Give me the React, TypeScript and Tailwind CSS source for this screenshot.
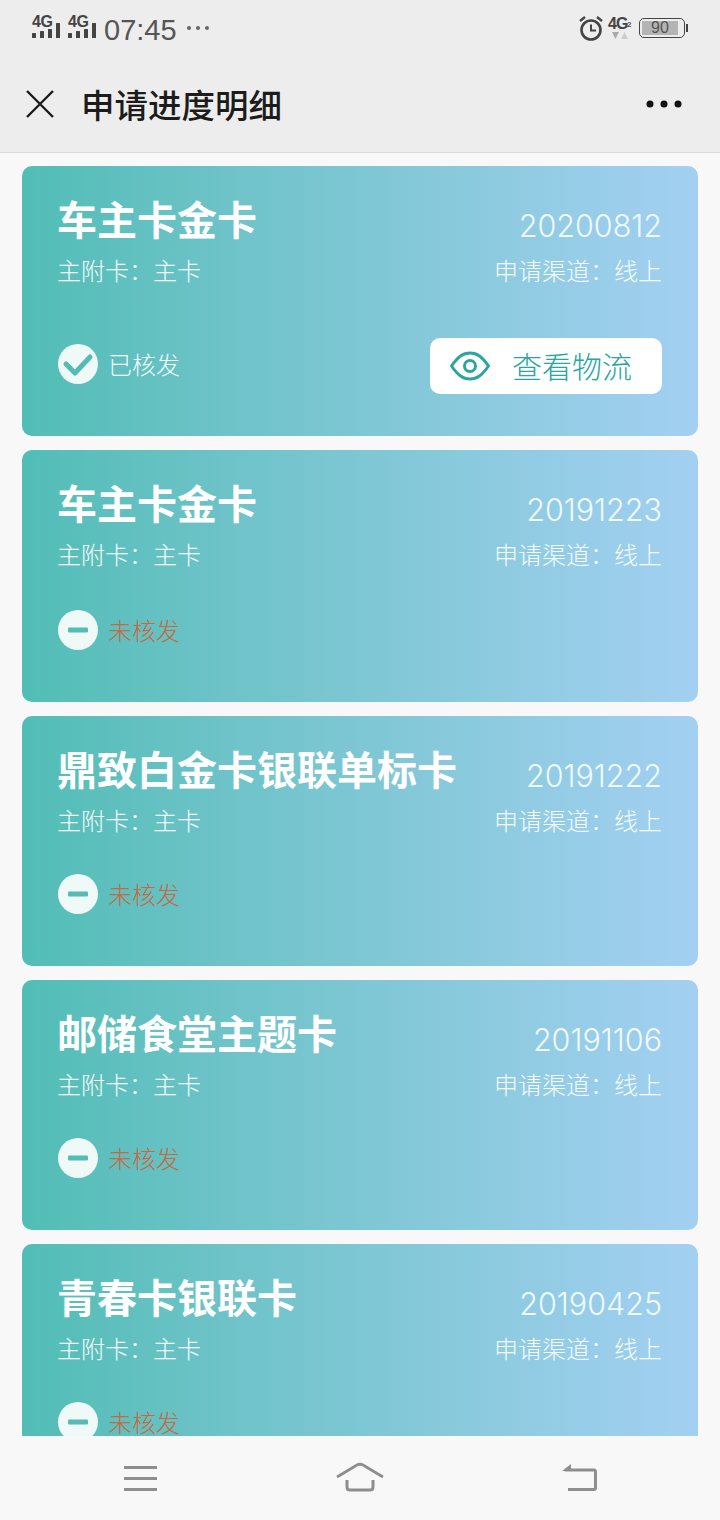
const CJK = "font-['Noto_Sans_CJK_SC','Noto_Sans',sans-serif]";

function Signal() {
  return (
    <div className="relative h-[26px] w-[30px]">
      <span className="absolute left-0 top-0 font-['Liberation_Sans',sans-serif] text-[16px] font-bold leading-[18px] tracking-[-0.5px] text-[#444]">4G</span>
      <svg width="30" height="26" viewBox="0 0 30 26" className="absolute left-0 top-0">
        <rect x="0" y="20" width="4" height="5" rx="0.5" fill="#444" />
        <rect x="8" y="18" width="4" height="7" rx="0.5" fill="#444" />
        <rect x="16" y="16" width="4" height="9" rx="0.5" fill="#444" />
        <rect x="24" y="10" width="4" height="15" rx="0.5" fill="#444" />
      </svg>
    </div>
  );
}

function StatusBar() {
  return (
    <div className="flex h-[60px] items-start justify-between pl-[32px] pr-[35px] pt-[13px]">
      <div className="flex items-start">
        <div className="flex gap-[6px]">
          <Signal />
          <Signal />
        </div>
        <span className="ml-[6px] mt-[1px] font-['Liberation_Sans',sans-serif] text-[29px] leading-[32px] text-[#555]">07:45</span>
        <svg width="24" height="6" viewBox="0 0 24 6" className="ml-[9px] mt-[12px]">
          <circle cx="3" cy="3" r="2" fill="#666" />
          <circle cx="12" cy="3" r="2" fill="#666" />
          <circle cx="21" cy="3" r="2" fill="#666" />
        </svg>
      </div>
      <div className="mt-[1px] flex items-center">
        <svg width="26" height="26" viewBox="0 0 26 26">
          <circle cx="13" cy="15" r="9.5" fill="none" stroke="#444" strokeWidth="2.6" />
          <path d="M13 9.5V15.5H18" fill="none" stroke="#444" strokeWidth="2" />
          <path d="M2 6L7 2M24 6L19 2" stroke="#444" strokeWidth="2.4" />
        </svg>
        <div className="relative ml-[4px] h-[28px] w-[26px]">
          <span className="absolute left-0 top-0 font-['Liberation_Sans',sans-serif] text-[16px] font-bold leading-[20px] tracking-[-1px] text-[#444]">4G</span>
          <span className="absolute left-[19px] top-[6px] font-['Liberation_Sans',sans-serif] text-[8px] font-bold leading-[10px] text-[#555]">2</span>
          <svg width="16" height="7" viewBox="0 0 16 7" className="absolute left-[4px] top-[18px]">
            <path d="M0 0H7L3.5 7Z" fill="#aaa" />
            <path d="M9 7H16L12.5 0Z" fill="#ccc" />
          </svg>
        </div>
        <div className="relative ml-[5px] flex h-[20px] w-[46px] items-center rounded-[5px] border border-[#444] p-[2px]">
          <div className="flex h-full w-[36px] items-center justify-center bg-[#b4b4b4]">
            <span className="font-['Liberation_Sans',sans-serif] text-[16px] leading-none text-[#555]">90</span>
          </div>
          <div className="absolute right-[-4px] top-[5px] h-[8px] w-[2px] bg-[#444]" />
        </div>
      </div>
    </div>
  );
}

function NavBar() {
  return (
    <div className="flex h-[93px] items-center justify-between border-b border-[#dcdcdc] pb-[5px] pl-[26px] pr-[36px]">
      <div className="flex items-center">
        <svg width="28" height="28" viewBox="0 0 28 28">
          <path d="M1 1L27 27M27 1L1 27" stroke="#1c1c1c" strokeWidth="2.4" />
        </svg>
        <span className={`ml-[27px] ${CJK} text-[33.5px] font-medium leading-[44px] text-[#1c1c1c]`}>申请进度明细</span>
      </div>
      <svg width="38" height="8" viewBox="0 0 38 8">
        <circle cx="4" cy="4" r="3.5" fill="#111" />
        <circle cx="18" cy="4" r="3.5" fill="#111" />
        <circle cx="32" cy="4" r="3.5" fill="#111" />
      </svg>
    </div>
  );
}

function CheckBadge() {
  return (
    <svg width="40" height="40" viewBox="0 0 40 40">
      <circle cx="20" cy="20" r="20" fill="#eef9f8" />
      <path d="M8 20L17 29L32 13" fill="none" stroke="#56bab6" strokeWidth="5" strokeLinecap="round" strokeLinejoin="round" />
    </svg>
  );
}

function MinusBadge() {
  return (
    <svg width="40" height="40" viewBox="0 0 40 40">
      <circle cx="20" cy="20" r="20" fill="#eef9f8" />
      <rect x="10" y="17.5" width="20" height="5" rx="1" fill="#56bab6" />
    </svg>
  );
}

type CardData = {
  title: string;
  date: string;
  heightClass: string;
  statusGapClass: string;
  done?: boolean;
};

const cards: CardData[] = [
  { title: "车主卡金卡", date: "20200812", heightClass: "h-[270px]", statusGapClass: "mt-[47px]", done: true },
  { title: "车主卡金卡", date: "20191223", heightClass: "h-[252px]", statusGapClass: "mt-[39px]" },
  { title: "鼎致白金卡银联单标卡", date: "20191222", heightClass: "h-[250px]", statusGapClass: "mt-[37px]" },
  { title: "邮储食堂主题卡", date: "20191106", heightClass: "h-[250px]", statusGapClass: "mt-[37px]" },
  { title: "青春卡银联卡", date: "20190425", heightClass: "h-[250px]", statusGapClass: "mt-[37px]" },
];

function Card({ title, date, heightClass, statusGapClass, done }: CardData) {
  return (
    <div className={`${heightClass} shrink-0 rounded-[10px] bg-gradient-to-r from-[#51bdb6] to-[#a3d0f2] pl-[36px] pr-[36px] pt-[24px]`}>
      <div className="flex items-end justify-between">
        <span className={`-ml-px ${CJK} text-[40px] font-bold leading-[56px] text-white`}>{title}</span>
        <span className="mb-[2px] font-['Inter',sans-serif] text-[30.5px] font-light leading-[36px] text-[#f0f9fb]">{date}</span>
      </div>
      <div className="mt-[7px] flex items-center justify-between">
        <span className={`-ml-px ${CJK} text-[24px] font-light leading-[34px] text-[#f4fcfc]`}>主附卡：主卡</span>
        <span className={`${CJK} text-[24px] font-light leading-[34px] text-[#f4fcfc]`}>申请渠道：线上</span>
      </div>
      <div className={`${statusGapClass} flex items-center justify-between`}>
        <div className="flex items-center">
          {done ? <CheckBadge /> : <MinusBadge />}
          <span className={`ml-[10px] ${CJK} text-[24px] font-light leading-[34px] ${done ? "text-[#f4fcfc]" : "text-[#c8683f]"}`}>
            {done ? "已核发" : "未核发"}
          </span>
        </div>
        {done && (
          <div className="mt-[4px] flex h-[56px] w-[232px] items-center rounded-[10px] bg-white pl-[20px]">
            <svg width="40" height="30" viewBox="0 0 40 30">
              <path d="M1.5 15C8 5.5 13 2 20 2C27 2 32 5.5 38.5 15C32 24.5 27 28 20 28C13 28 8 24.5 1.5 15Z" fill="none" stroke="#2aa59f" strokeWidth="3" strokeLinejoin="round" />
              <circle cx="20" cy="15" r="5.5" fill="none" stroke="#2aa59f" strokeWidth="3" />
            </svg>
            <span className={`ml-[22px] pb-[3px] ${CJK} text-[30px] font-light leading-[40px] text-[#2aa59f]`}>查看物流</span>
          </div>
        )}
      </div>
    </div>
  );
}

function BottomBar() {
  return (
    <div className="relative z-10 flex h-[84px] shrink-0 items-start justify-between bg-[#f8f8f8] pl-[124px] pr-[122px] pt-[26px]">
      <svg width="34" height="36" viewBox="0 0 34 36" className="mt-[4px]">
        <path d="M0 1.5H33M0 12.5H33M0 23.5H33" stroke="#8e8e8e" strokeWidth="3" />
      </svg>
      <svg width="50" height="42" viewBox="0 0 50 42">
        <path d="M2 15L22 3Q25 1.5 28 3L48 15" fill="none" stroke="#8e8e8e" strokeWidth="2.8" />
        <path d="M12 18V25Q12 28 15 28H35Q38 28 38 25V18" fill="none" stroke="#8e8e8e" strokeWidth="3" />
      </svg>
      <svg width="36" height="36" viewBox="0 0 36 36" className="mt-[2px]">
        <path d="M3 6H32Q33.5 6 33.5 8V24Q33.5 25.5 32 25.5H6" fill="none" stroke="#8e8e8e" strokeWidth="3" />
        <path d="M0 7L9 0V7Z" fill="#8e8e8e" />
      </svg>
    </div>
  );
}

export default function App() {
  return (
    <div className="flex h-[1520px] w-[720px] flex-col overflow-hidden bg-[#f8f8f8]">
      <div className="shrink-0 bg-[#ededed]">
        <StatusBar />
        <NavBar />
      </div>
      <div className="flex min-h-0 flex-1 flex-col gap-[14px] overflow-hidden px-[22px] pt-[13px]">
        {cards.map((c, i) => (
          <Card key={i} {...c} />
        ))}
      </div>
      <BottomBar />
    </div>
  );
}
